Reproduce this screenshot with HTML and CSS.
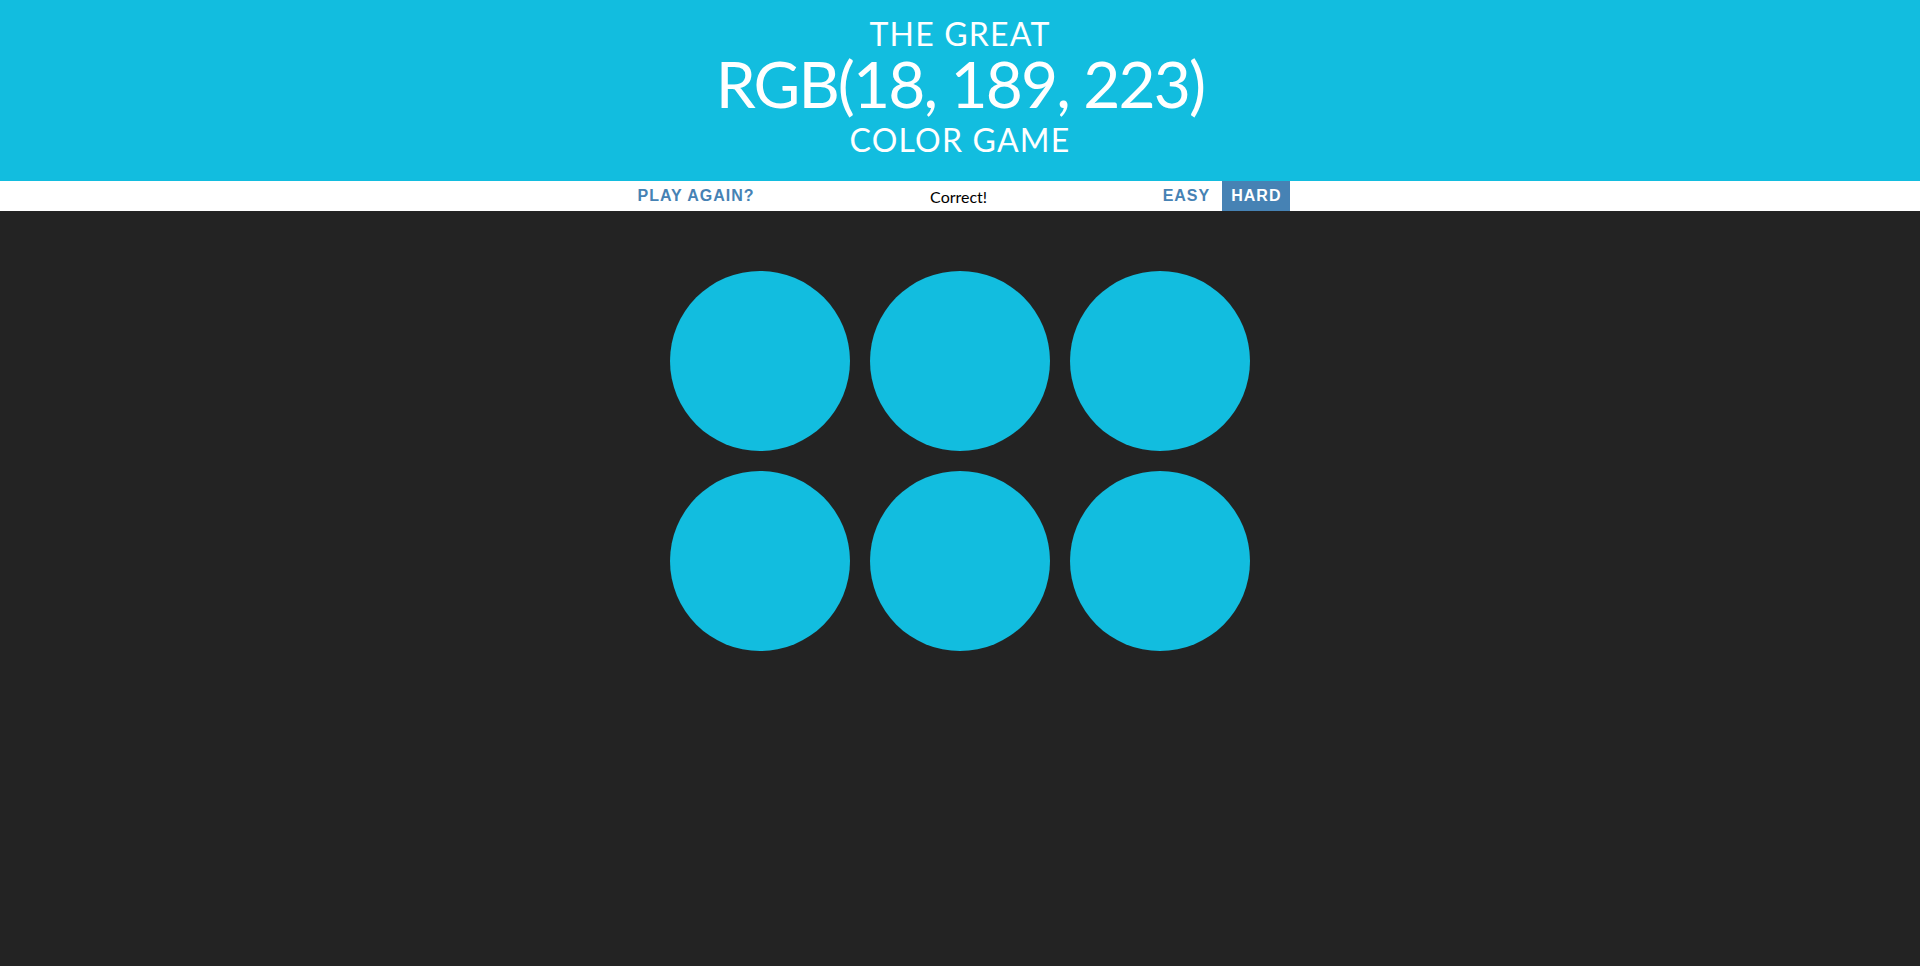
FILE: index.html
```html
<!DOCTYPE html>
<html lang="en">
<head>
<meta charset="utf-8">
<title>Color Game</title>
<link rel="stylesheet" href="styles.css">
</head>
<body>
<h1 class="title">
  <span class="title-line">The Great</span>
  <span class="title-color">rgb(18, 189, 223)</span>
  <span class="title-line title-last">Color Game</span>
</h1>
<div class="stripe">
  <button class="btn">Play Again?</button>
  <span class="message">Correct!</span>
  <button class="btn">Easy</button>
  <button class="btn selected">Hard</button>
</div>
<div class="board">
  <div class="square"></div>
  <div class="square"></div>
  <div class="square"></div>
  <div class="square"></div>
  <div class="square"></div>
  <div class="square"></div>
</div>
</body>
</html>
```

FILE: styles.css
```css
html, body {
  margin: 0;
  padding: 0;
}

body {
  background: #232323;
  font-family: Lato, "Open Sans", sans-serif;
}

.title {
  margin: 0;
  padding: 18px 0 25px;
  background: rgb(18, 189, 223);
  color: #ffffff;
  text-align: center;
  text-transform: uppercase;
  font-weight: normal;
}

.title-line {
  display: block;
  font-size: 32px;
  line-height: 32px;
  letter-spacing: 1.2px;
}

.title-color {
  display: block;
  margin-top: 1.5px;
  font-size: 64px;
  line-height: 64px;
  letter-spacing: -1.9px;
}

.title-last {
  margin-top: 8.5px;
}

.stripe {
  display: flex;
  justify-content: center;
  align-items: center;
  gap: 4px;
  height: 30px;
  background: #ffffff;
}

.btn {
  height: 100%;
  margin: 0;
  padding: 0 8px;
  border: none;
  background: none;
  color: steelblue;
  font-family: "Liberation Sans", Arial, sans-serif;
  font-weight: 700;
  font-size: 16px;
  letter-spacing: 1px;
  text-transform: uppercase;
  cursor: pointer;
}

.btn.selected {
  padding: 0 9px;
  background: steelblue;
  color: #ffffff;
}

.message {
  width: 384px;
  text-align: center;
  color: #000000;
  font-size: 16px;
}

.board {
  display: flex;
  flex-wrap: wrap;
  max-width: 600px;
  margin: 50px auto 0;
}

.square {
  width: 180px;
  height: 180px;
  margin: 10px;
  border-radius: 50%;
  background: rgb(18, 189, 223);
}
```
